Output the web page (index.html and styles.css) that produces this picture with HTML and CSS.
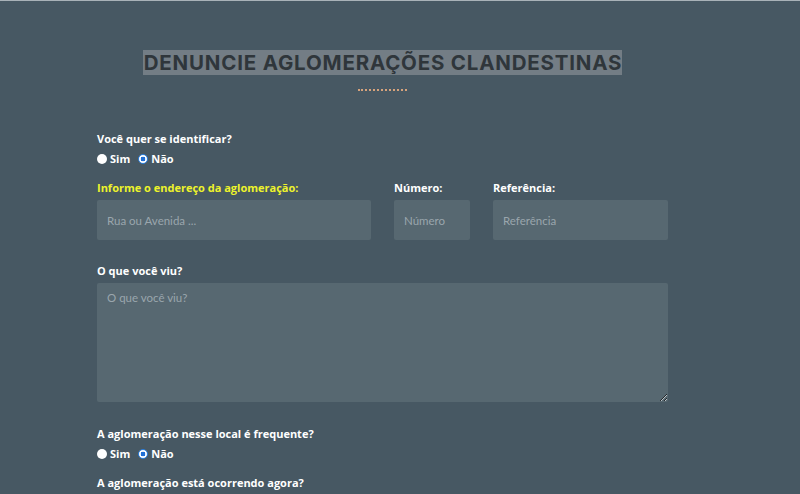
FILE: index.html
```html
<!DOCTYPE html>
<html lang="pt-BR">
<head>
<meta charset="utf-8">
<title>Denuncie</title>
<link rel="stylesheet" href="styles.css">
</head>
<body>
<main class="page">
  <header class="head">
    <h1 class="title"><span class="title-mark">DENUNCIE AGLOMERAÇÕES CLANDESTINAS</span></h1>
    <div class="dots"></div>
  </header>
  <form class="form">
    <div class="group">
      <p class="label">Você quer se identificar?</p>
      <div class="radios">
        <label class="radio"><input type="radio" name="id"><span>Sim</span></label>
        <label class="radio"><input type="radio" name="id" checked><span>Não</span></label>
      </div>
    </div>
    <div class="address">
      <div class="field street">
        <p class="label yellow">Informe o endereço da aglomeração:</p>
        <input class="input" type="text" placeholder="Rua ou Avenida ...">
      </div>
      <div class="field num">
        <p class="label">Número:</p>
        <input class="input" type="text" placeholder="Número">
      </div>
      <div class="field ref">
        <p class="label">Referência:</p>
        <input class="input" type="text" placeholder="Referência">
      </div>
    </div>
    <div class="field saw">
      <p class="label">O que você viu?</p>
      <textarea class="input area" placeholder="O que você viu?"></textarea>
    </div>
    <div class="group freq">
      <p class="label">A aglomeração nesse local é frequente?</p>
      <div class="radios">
        <label class="radio"><input type="radio" name="fr"><span>Sim</span></label>
        <label class="radio"><input type="radio" name="fr" checked><span>Não</span></label>
      </div>
    </div>
    <div class="group now">
      <p class="label">A aglomeração está ocorrendo agora?</p>
    </div>
  </form>
</main>
</body>
</html>
```
FILE: styles.css
```css
html, body {
  margin: 0;
  padding: 0;
  height: 100%;
  overflow: hidden;
}
body {
  background: #475863;
  border-top: 1px solid #a9b2b8;
  box-sizing: border-box;
  font-family: "Open Sans", "Lato", sans-serif;
  color: #ffffff;
}
.page {
  width: 571px;
  margin-left: 97px;
  padding-top: 50px;
}
.head {
  display: flex;
  flex-direction: column;
  align-items: center;
}
.title {
  margin: 0;
  font-family: "Inter", "Open Sans", sans-serif;
  font-weight: 700;
  font-size: 20.5px;
  line-height: 24px;
  letter-spacing: 0.8px;
  color: #2f363b;
}
.title-mark {
  background: #737d85;
  padding: 0 0 0 1px;
}
.dots {
  margin-top: 14px;
  width: 49px;
  border-bottom: 2px dotted #d7a37c;
}
.form {
  padding-top: 41px;
  display: flex;
  flex-direction: column;
}
.label {
  margin: 0;
  font-size: 11px;
  font-weight: 700;
  line-height: 14px;
  color: #ffffff;
}
.label.yellow {
  color: #eef32b;
}
.radios {
  display: flex;
  gap: 8px;
  margin-top: 6px;
}
.radio {
  display: flex;
  align-items: center;
  gap: 3px;
  font-size: 11px;
  font-weight: 700;
  line-height: 14px;
}
.radio input {
  appearance: none;
  -webkit-appearance: none;
  margin: 0;
  width: 10px;
  height: 10px;
  border-radius: 50%;
  background: #ffffff;
  box-sizing: border-box;
}
.radio input:checked {
  border: 1.5px solid #2a7fe0;
  background: radial-gradient(circle, #1f6fd6 0 2.2px, #ffffff 2.6px);
}
.address {
  display: flex;
  gap: 23px;
  margin-top: 15px;
}
.field {
  display: flex;
  flex-direction: column;
  gap: 5px;
}
.street { width: 274px; }
.num { width: 76px; }
.ref { width: 175px; }
.input {
  box-sizing: border-box;
  width: 100%;
  height: 40px;
  border: none;
  border-radius: 2px;
  background: #576871;
  padding: 0 10px;
  font-family: "Lato", "Open Sans", sans-serif;
  font-size: 11.5px;
  color: #ffffff;
  outline: none;
}
.input::placeholder {
  color: #9aa6ad;
}
.saw {
  margin-top: 24px;
}
.area {
  height: 119px;
  padding: 8px 10px;
  resize: vertical;
}
.freq {
  margin-top: 25px;
}
.now {
  margin-top: 15px;
}
```
